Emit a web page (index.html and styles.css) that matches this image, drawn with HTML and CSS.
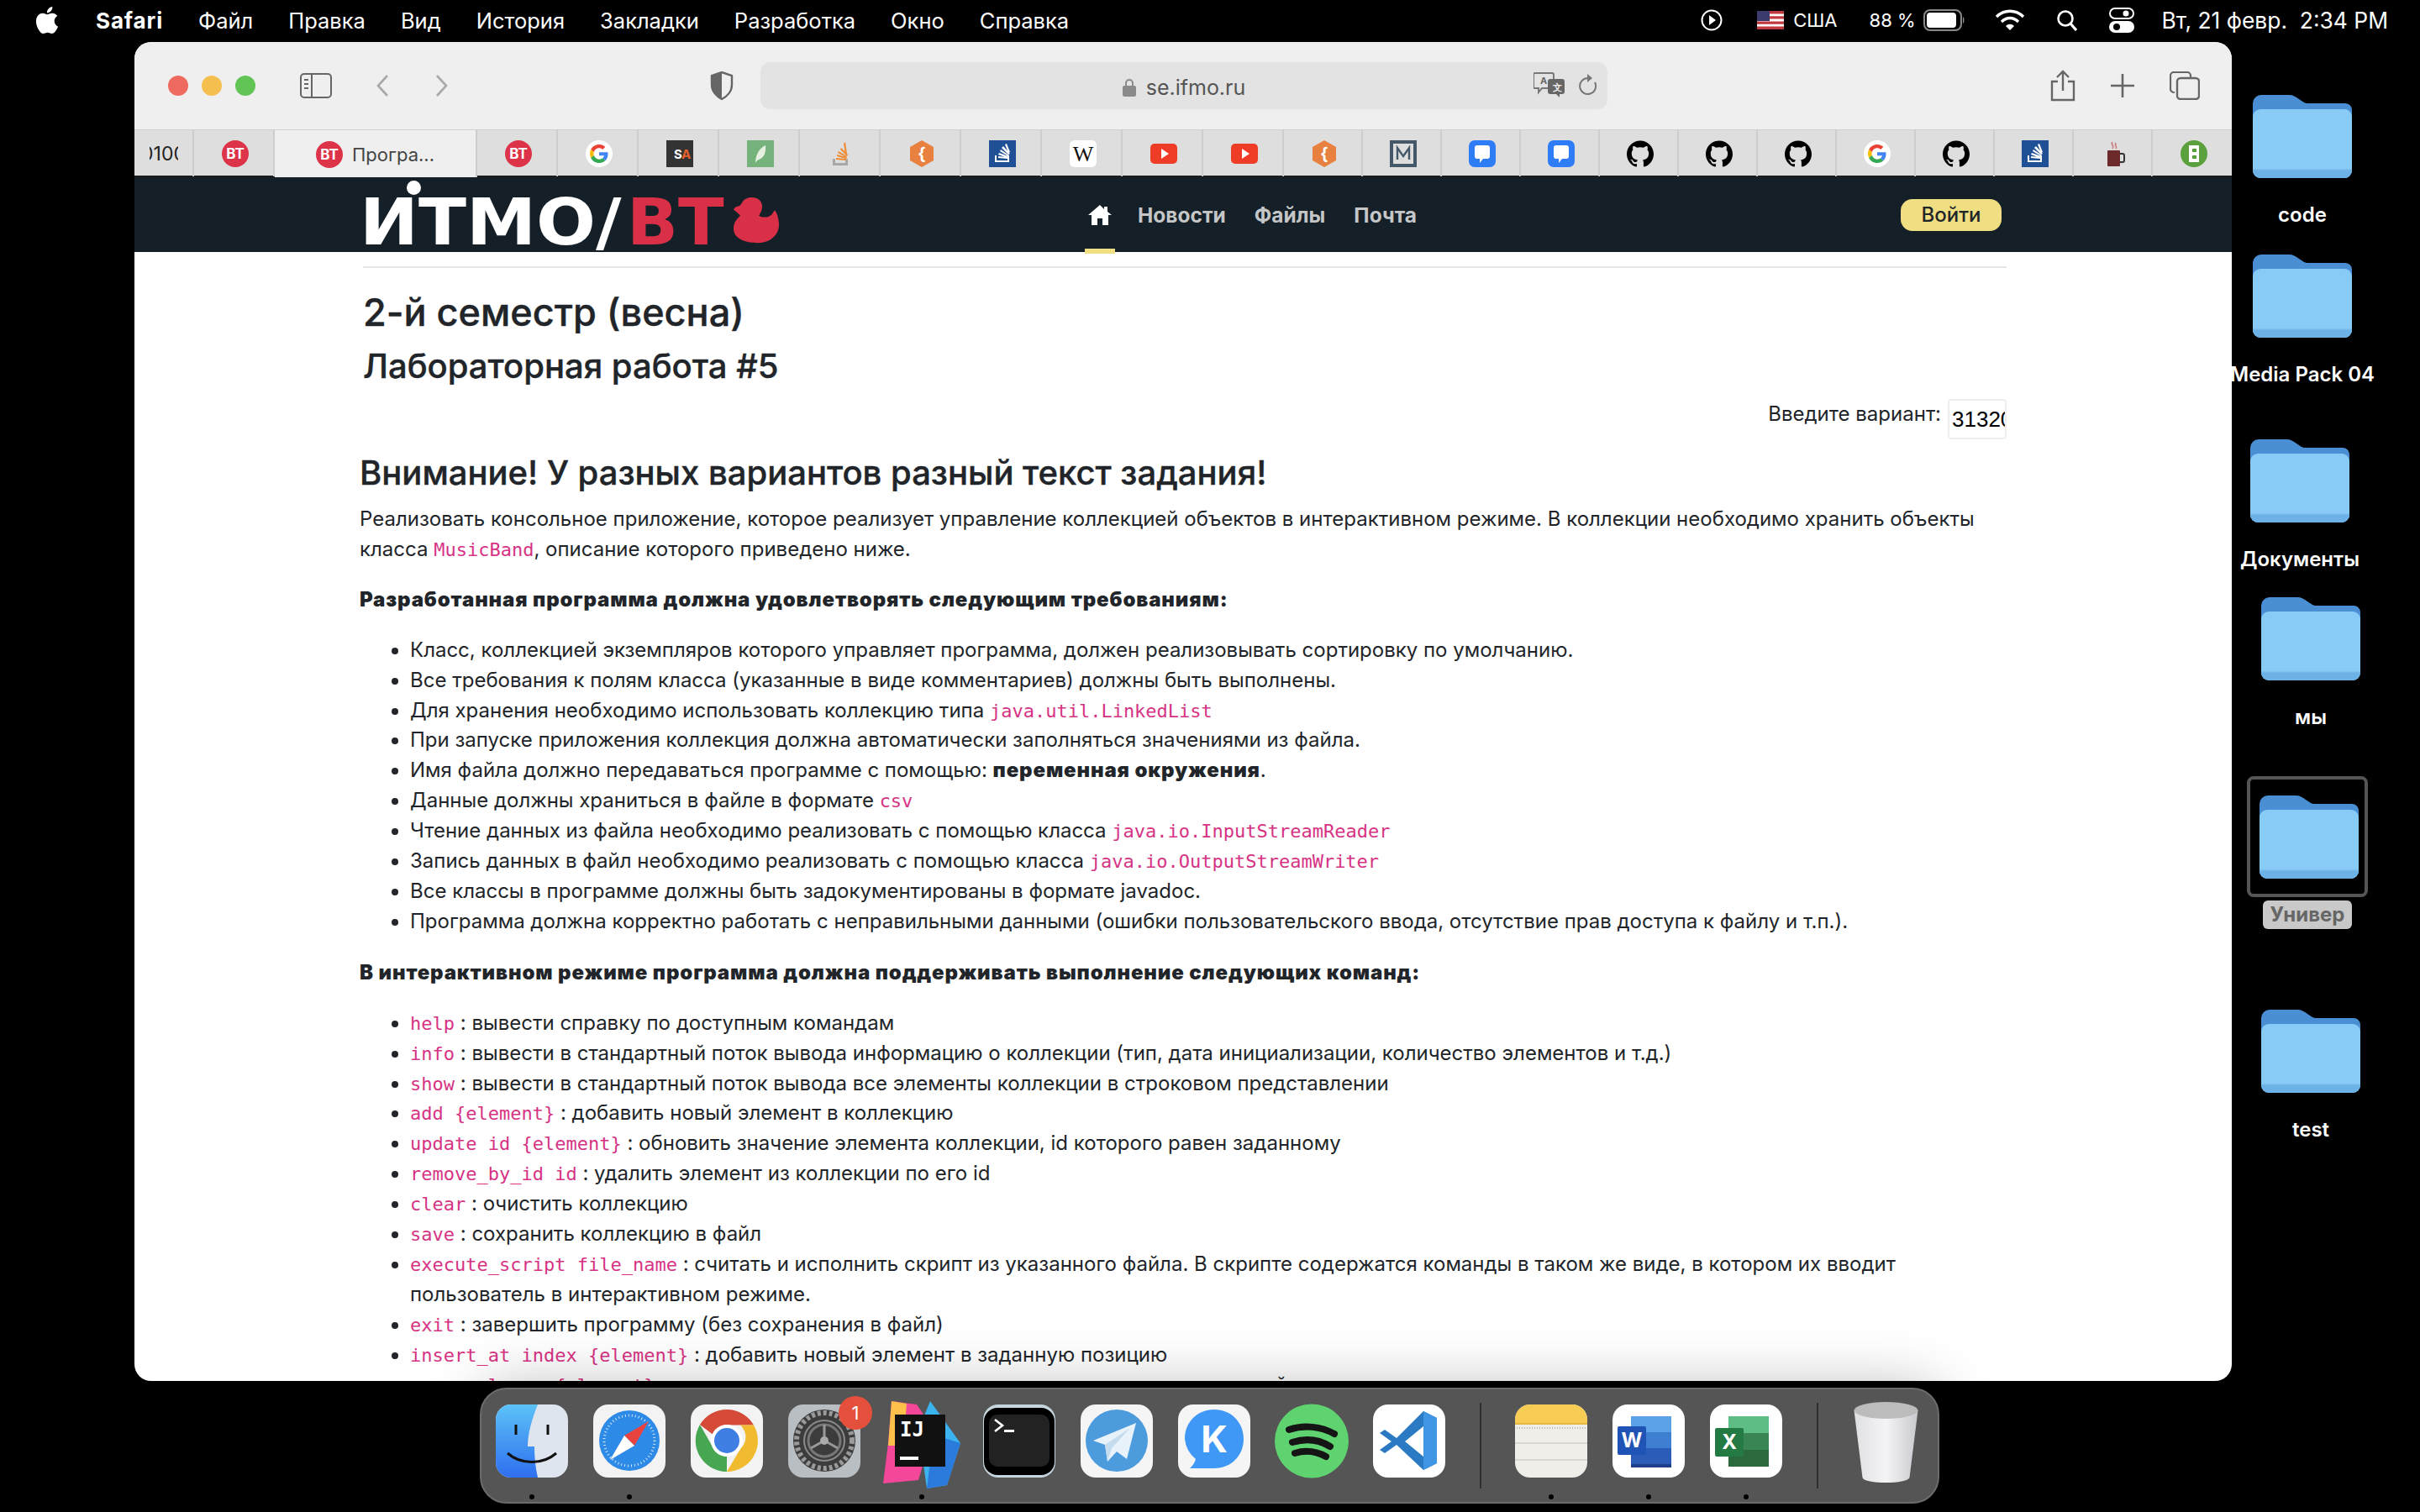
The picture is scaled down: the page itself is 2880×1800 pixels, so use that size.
FILE: index.html
```html
<!DOCTYPE html>
<html lang="ru">
<head>
  <meta charset="utf-8">
  <title>Лабораторная работа #5</title>
  <link rel="stylesheet" href="styles.css">
</head>
<body>
<svg class="defs" width="0" height="0">
  <defs>
    <symbol id="folder" viewBox="0 0 118 99">
      <path d="M0 10a10 10 0 0 1 10-10h33c5 0 8 2 12 5l6 4c2 1 4 1 7 1h42a8 8 0 0 1 8 8v30H0z" fill="#4a8fd3"/>
      <rect x="0" y="17" width="118" height="82" rx="9" fill="#88cbf7"/>
      <path d="M0 88h118v2a9 9 0 0 1-9 9H9a9 9 0 0 1-9-9z" fill="#6cb2e6"/>
      <rect x="0" y="88" width="118" height="1.5" fill="#7fc0ee"/>
    </symbol>
    <symbol id="fav-bt" viewBox="0 0 32 32">
      <circle cx="16" cy="16" r="16" fill="#dc3349"/>
      <text x="16" y="22" text-anchor="middle" class="fav-text" fill="#fff" font-size="17">BT</text>
    </symbol>
    <symbol id="fav-g" viewBox="0 0 32 32">
      <circle cx="16" cy="16" r="16" fill="#fff"/>
      <g transform="translate(5 5) scale(.4583)">
        <path fill="#EA4335" d="M24 9.5c3.54 0 6.71 1.22 9.21 3.6l6.85-6.85C35.9 2.38 30.47 0 24 0 14.62 0 6.51 5.38 2.56 13.22l7.98 6.19C12.43 13.72 17.74 9.5 24 9.5z"/>
        <path fill="#4285F4" d="M46.98 24.55c0-1.57-.15-3.09-.38-4.55H24v9.02h12.94c-.58 2.96-2.26 5.48-4.78 7.18l7.73 6c4.51-4.18 7.09-10.36 7.09-17.65z"/>
        <path fill="#FBBC05" d="M10.53 28.59c-.48-1.45-.76-2.99-.76-4.59s.27-3.14.76-4.59l-7.98-6.19C.92 16.46 0 20.12 0 24c0 3.88.92 7.54 2.56 10.78l7.97-6.19z"/>
        <path fill="#34A853" d="M24 48c6.48 0 11.93-2.13 15.89-5.81l-7.73-6c-2.15 1.45-4.92 2.3-8.16 2.3-6.26 0-11.57-4.22-13.47-9.91l-7.98 6.19C6.51 42.62 14.62 48 24 48z"/>
      </g>
    </symbol>
    <symbol id="fav-hex" viewBox="0 0 32 32">
      <path d="M16 0l14 8v16l-14 8-14-8V8z" fill="#e8813f"/>
      <text x="16" y="23" text-anchor="middle" class="fav-text" fill="#fff" font-size="20">{</text>
    </symbol>
    <symbol id="fav-stack" viewBox="0 0 32 32">
      <rect width="32" height="32" fill="#1f4f94"/>
      <path d="M7 18v8h17v-8h-2v6H9v-6z" fill="#fff"/>
      <path d="M11 19l11 1v2l-11-1zM12 15l11 4-1 2-11-4zM14 11l10 7-1 1-10-6zM17 7l8 9-2 1-8-8zM21 4l4 10-2 1-4-10z" fill="#fff"/>
    </symbol>
    <symbol id="fav-java" viewBox="0 0 32 32">
      <path d="M6 22v8h18v-8h-3v5H9v-5z" fill="#a8a8a8"/>
      <path d="M10 21l12 1v2l-12-1zM11 17l12 3-1 2-11-3zM13 13l10 6-1 1-10-5zM16 9l8 8-1 2-8-8zM21 2l2 14-2 1-2-13z" fill="#ef8b33"/>
    </symbol>
    <symbol id="fav-yt" viewBox="0 0 32 32">
      <rect y="4" width="32" height="24" rx="5" fill="#ee3c27"/>
      <path d="M13 10l9 6-9 6z" fill="#fff"/>
    </symbol>
    <symbol id="fav-chat" viewBox="0 0 32 32">
      <rect width="32" height="32" rx="7" fill="#2f7df6"/>
      <path d="M7 9a3 3 0 0 1 3-3h12a3 3 0 0 1 3 3v10a3 3 0 0 1-3 3h-5l-4 5v-5h-3a3 3 0 0 1-3-3z" fill="#fff"/>
    </symbol>
    <symbol id="fav-gh" viewBox="0 0 24 24">
      <path d="M12 .297c-6.63 0-12 5.373-12 12 0 5.303 3.438 9.8 8.205 11.385.6.113.82-.258.82-.577 0-.285-.01-1.04-.015-2.04-3.338.724-4.042-1.61-4.042-1.61C4.422 18.07 3.633 17.7 3.633 17.7c-1.087-.744.084-.729.084-.729 1.205.084 1.838 1.236 1.838 1.236 1.07 1.835 2.809 1.305 3.495.998.108-.776.417-1.305.76-1.605-2.665-.3-5.466-1.332-5.466-5.93 0-1.31.465-2.38 1.235-3.22-.135-.303-.54-1.523.105-3.176 0 0 1.005-.322 3.3 1.23.96-.267 1.98-.399 3-.405 1.02.006 2.04.138 3 .405 2.28-1.552 3.285-1.23 3.285-1.23.645 1.653.24 2.873.12 3.176.765.84 1.23 1.91 1.23 3.22 0 4.61-2.805 5.625-5.475 5.92.42.36.81 1.096.81 2.22 0 1.606-.015 2.896-.03 3.286 0 .315.21.69.825.57C20.565 22.092 24 17.592 24 12.297c0-6.627-5.373-12-12-12"/>
    </symbol>
  </defs>
</svg>

<!-- menu bar -->
<header class="menubar">
  <nav class="menu-left">
    <svg class="apple" viewBox="0 0 24 24"><path fill="#fff" d="M12.152 6.896c-.948 0-2.415-1.078-3.96-1.04-2.04.027-3.91 1.183-4.961 3.014-2.117 3.675-.546 9.103 1.519 12.09 1.013 1.454 2.208 3.09 3.792 3.039 1.52-.065 2.09-.987 3.935-.987 1.831 0 2.35.987 3.96.948 1.637-.026 2.676-1.48 3.676-2.948 1.156-1.688 1.636-3.325 1.662-3.415-.039-.013-3.182-1.221-3.22-4.857-.026-3.04 2.48-4.494 2.597-4.559-1.429-2.09-3.623-2.324-4.39-2.376-2-.156-3.675 1.09-4.61 1.09zM15.53 3.83c.843-1.012 1.4-2.427 1.245-3.83-1.207.052-2.662.805-3.532 1.818-.78.896-1.454 2.338-1.273 3.714 1.338.104 2.715-.688 3.559-1.701"/></svg>
    <b class="app-name">Safari</b>
    <span>Файл</span><span>Правка</span><span>Вид</span><span>История</span><span>Закладки</span><span>Разработка</span><span>Окно</span><span>Справка</span>
  </nav>
  <div class="menu-right">
    <svg class="st-play" viewBox="0 0 26 26"><circle cx="13" cy="13" r="11.5" fill="none" stroke="#fff" stroke-width="2"/><path d="M10 7l8 6-8 6z" fill="#fff"/></svg>
    <svg class="st-flag" viewBox="0 0 32 22">
      <rect width="32" height="22" fill="#fff"/>
      <path d="M0 0h32v3.4H0zM0 6.2h32v3.4H0zM0 12.4h32v3.4H0zM0 18.6h32V22H0z" fill="#c0393f"/>
      <rect width="15" height="12" fill="#3c3b6e"/>
    </svg>
    <span class="st-lang">США</span>
    <span class="st-pct">88 %</span>
    <svg class="st-batt" viewBox="0 0 50 26"><rect x="1" y="1" width="44" height="24" rx="7" fill="none" stroke="#8a8a8a" stroke-width="2"/><rect x="4" y="4" width="35" height="18" rx="4" fill="#fff"/><path d="M47 9c2 1 2 7 0 8z" fill="#8a8a8a"/></svg>
    <svg class="st-wifi" viewBox="0 0 36 26"><path d="M2 9c9-9 23-9 32 0" fill="none" stroke="#fff" stroke-width="3.4"/><path d="M8 15c6-6 14-6 20 0" fill="none" stroke="#fff" stroke-width="3.4"/><path d="M13 20c3-3 7-3 10 0l-5 5z" fill="#fff"/></svg>
    <svg class="st-search" viewBox="0 0 26 26"><circle cx="11" cy="11" r="8.5" fill="none" stroke="#fff" stroke-width="2.6"/><path d="M17 17l7 8" stroke="#fff" stroke-width="3.2"/></svg>
    <svg class="st-ctrl" viewBox="0 0 30 30"><rect x="1" y="1" width="28" height="12" rx="6" fill="none" stroke="#fff" stroke-width="2"/><circle cx="20" cy="7" r="3.5" fill="#fff"/><rect y="16" width="30" height="14" rx="7" fill="#fff"/><circle cx="9" cy="23" r="4" fill="#000"/></svg>
    <span class="st-clock">Вт, 21 февр.&nbsp; 2:34 PM</span>
  </div>
</header>

<!-- desktop folders -->
<div class="desk-item item-code">
  <svg class="folder"><use href="#folder"/></svg>
  <span class="desk-label">code</span>
</div>
<div class="desk-item item-media">
  <svg class="folder"><use href="#folder"/></svg>
  <span class="desk-label">Media Pack 04</span>
</div>
<div class="desk-item item-docs">
  <svg class="folder"><use href="#folder"/></svg>
  <span class="desk-label">Документы</span>
</div>
<div class="desk-item item-we">
  <svg class="folder"><use href="#folder"/></svg>
  <span class="desk-label">мы</span>
</div>
<div class="desk-item item-univer">
  <div class="desk-select"><svg class="folder"><use href="#folder"/></svg></div>
  <span class="desk-label selected">Универ</span>
</div>
<div class="desk-item item-test">
  <svg class="folder"><use href="#folder"/></svg>
  <span class="desk-label">test</span>
</div>

<!-- safari window -->
<main class="window">
  <div class="toolbar">
    <div class="lights"><i class="light red"></i><i class="light yellow"></i><i class="light green"></i></div>
    <svg class="tb-sidebar" viewBox="0 0 38 30"><rect x="1" y="1" width="36" height="28" rx="4" fill="none" stroke="#666" stroke-width="2"/><path d="M14 1v28" stroke="#666" stroke-width="2"/><path d="M5 8h5M5 13h5M5 18h5" stroke="#666" stroke-width="2"/></svg>
    <svg class="tb-back" viewBox="0 0 16 28"><path d="M14 2L3 14l11 12" fill="none" stroke="#a9a9a9" stroke-width="2.6"/></svg>
    <svg class="tb-forward" viewBox="0 0 16 28"><path d="M2 2l11 12L2 26" fill="none" stroke="#a9a9a9" stroke-width="2.6"/></svg>
    <svg class="tb-shield" viewBox="0 0 28 34"><path d="M14 1l12 4v11c0 8-6 14-12 17C8 30 2 24 2 16V5z" fill="none" stroke="#666" stroke-width="2.4"/><path d="M14 1L2 5v11c0 8 6 14 12 17z" fill="#666"/></svg>
    <div class="urlbar">
      <svg class="url-lock" viewBox="0 0 16 22"><path d="M4 10V6a4 4 0 0 1 8 0v4" fill="none" stroke="#8a8a8a" stroke-width="2"/><rect y="9" width="16" height="13" rx="2" fill="#8a8a8a"/></svg>
      <span class="url-text">se.ifmo.ru</span>
      <svg class="url-translate" viewBox="0 0 38 30">
        <path d="M2 1h20a2 2 0 0 1 2 2v14a2 2 0 0 1-2 2H10l-4 5v-5H2a2 2 0 0 1-2-2V3a2 2 0 0 1 2-2z" fill="#e3e3e3" stroke="#777" stroke-width="2"/>
        <rect x="17" y="8" width="20" height="18" rx="3" fill="#666"/><path d="M31 26v4l-4-4z" fill="#666"/>
        <text x="8" y="14" class="fav-text" font-size="11" fill="#666">A</text>
        <text x="23" y="22" class="fav-text" font-size="11" fill="#eee">文</text>
      </svg>
      <svg class="url-reload" viewBox="0 0 22 28"><path d="M12 5a9.5 9.5 0 1 0 8 5" fill="none" stroke="#777" stroke-width="2"/><path d="M11 0l6 5-6 5z" fill="#777"/></svg>
    </div>
    <svg class="tb-share" viewBox="0 0 30 38"><path d="M9 14H2v22h26V14h-7" fill="none" stroke="#666" stroke-width="2.4"/><path d="M15 25V2M8 9l7-7 7 7" fill="none" stroke="#666" stroke-width="2.4"/></svg>
    <svg class="tb-plus" viewBox="0 0 28 28"><path d="M14 0v28M0 14h28" stroke="#666" stroke-width="2.6"/></svg>
    <svg class="tb-tabs" viewBox="0 0 36 34"><path d="M6 25H5a4 4 0 0 1-4-4V5a4 4 0 0 1 4-4h16a4 4 0 0 1 4 4v2" fill="none" stroke="#666" stroke-width="2.2"/><rect x="9" y="8" width="26" height="25" rx="4" fill="none" stroke="#666" stroke-width="2.4"/></svg>
  </div>

  <div class="tabs">
    <div class="tab tab-partial"><span class="tab-cut"><span>001000</span></span></div>
    <div class="tab"><svg class="fav"><use href="#fav-bt"/></svg></div>
    <div class="tab tab-active"><svg class="fav"><use href="#fav-bt"/></svg><span class="tab-title">Програ...</span></div>
    <div class="tab"><svg class="fav"><use href="#fav-bt"/></svg></div>
    <div class="tab"><svg class="fav"><use href="#fav-g"/></svg></div>
    <div class="tab"><svg class="fav" viewBox="0 0 32 32"><rect width="32" height="32" fill="#333"/><text x="9" y="22" class="fav-text" font-size="15" fill="#fff">S</text><text x="18" y="22" class="fav-text" font-size="15" fill="#e5622c">A</text></svg></div>
    <div class="tab"><svg class="fav" viewBox="0 0 32 32"><rect width="32" height="32" fill="#76b27b"/><path d="M22 6c1 9-2 15-8 17-2 1-3 2-4 4 0-7 3-17 12-21z" fill="#e6f0e2"/></svg></div>
    <div class="tab"><svg class="fav"><use href="#fav-java"/></svg></div>
    <div class="tab"><svg class="fav"><use href="#fav-hex"/></svg></div>
    <div class="tab"><svg class="fav"><use href="#fav-stack"/></svg></div>
    <div class="tab"><svg class="fav" viewBox="0 0 32 32"><rect width="32" height="32" rx="6" fill="#fff"/><text x="16" y="25" text-anchor="middle" font-family="Liberation Serif, serif" font-size="26" fill="#111">W</text></svg></div>
    <div class="tab"><svg class="fav"><use href="#fav-yt"/></svg></div>
    <div class="tab"><svg class="fav"><use href="#fav-yt"/></svg></div>
    <div class="tab tab-slim"><svg class="fav"><use href="#fav-hex"/></svg></div>
    <div class="tab tab-slim"><svg class="fav" viewBox="0 0 32 32"><rect x="2" y="2" width="28" height="28" fill="#dedede" stroke="#44586a" stroke-width="4"/><path d="M9 23V9l7 10 7-10v14" fill="none" stroke="#44586a" stroke-width="2.4"/></svg></div>
    <div class="tab tab-slim"><svg class="fav"><use href="#fav-chat"/></svg></div>
    <div class="tab tab-slim"><svg class="fav"><use href="#fav-chat"/></svg></div>
    <div class="tab tab-slim"><svg class="fav"><use href="#fav-gh"/></svg></div>
    <div class="tab tab-slim"><svg class="fav"><use href="#fav-gh"/></svg></div>
    <div class="tab tab-slim"><svg class="fav"><use href="#fav-gh"/></svg></div>
    <div class="tab tab-slim"><svg class="fav"><use href="#fav-g"/></svg></div>
    <div class="tab tab-slim"><svg class="fav"><use href="#fav-gh"/></svg></div>
    <div class="tab tab-slim"><svg class="fav"><use href="#fav-stack"/></svg></div>
    <div class="tab tab-slim"><svg class="fav" viewBox="0 0 32 32"><path d="M14 2c-3 3 3 4 0 8M18 3c-2 3 2 4 0 7" fill="none" stroke="#c97d7d" stroke-width="1.6"/><rect x="8" y="12" width="15" height="19" rx="1" fill="#6d2a2a"/><path d="M23 16h3a2 2 0 0 1 2 2v6a2 2 0 0 1-2 2h-3" fill="none" stroke="#333" stroke-width="2"/></svg></div>
    <div class="tab tab-slim"><svg class="fav" viewBox="0 0 32 32"><circle cx="16" cy="16" r="16" fill="#5aa03c"/><rect x="10" y="6" width="12" height="20" fill="#fff"/><rect x="14" y="10" width="5" height="4" fill="#5aa03c"/><rect x="14" y="18" width="5" height="4" fill="#5aa03c"/></svg></div>
  </div>

  <div class="sitenav">
    <div class="logo">
      <span class="logo-white">ИТМО/</span><span class="logo-red">BT</span>
      <i class="logo-dot"></i>
      <svg class="logo-duck" viewBox="0 0 54 62" preserveAspectRatio="none"><path d="M4 12c3 0 5-2 6-5 3-6 8-7 12-7 8 0 12 6 12 12 0 5-2 9-4 12 4 3 11 3 15-1 2-2 3-5 4-6 3 4 5 12 5 19 0 14-11 24-25 24C13 60 0 54 0 41c0-7 3-12 8-17-2-3-6-6-8-8 1-2 2-3 4-4z" fill="#d93048"/></svg>
    </div>
    <div class="nav-links">
      <a class="nav-home">
        <svg viewBox="0 0 30 26"><path d="M15 1L1 13h4v12h7v-8h6v8h7V13h4l-5-4V3h-4v3z" fill="#fff"/></svg>
      </a>
      <a>Новости</a><a>Файлы</a><a>Почта</a>
    </div>
    <button class="login">Войти</button>
  </div>

  <div class="page">
    <hr class="rule">
    <h1 class="title">2-й семестр (весна)</h1>
    <h2 class="subtitle">Лабораторная работа #5</h2>
    <div class="variant">
      <label for="variant">Введите вариант:</label>
      <input id="variant" type="text" value="313200">
    </div>
    <h2 class="notice">Внимание! У разных вариантов разный текст задания!</h2>
    <p>Реализовать консольное приложение, которое реализует управление коллекцией объектов в интерактивном режиме. В коллекции необходимо хранить объекты класса <code>MusicBand</code>, описание которого приведено ниже.</p>
    <p><b>Разработанная программа должна удовлетворять следующим требованиям:</b></p>
    <ul>
      <li>Класс, коллекцией экземпляров которого управляет программа, должен реализовывать сортировку по умолчанию.</li>
      <li>Все требования к полям класса (указанные в виде комментариев) должны быть выполнены.</li>
      <li>Для хранения необходимо использовать коллекцию типа <code>java.util.LinkedList</code></li>
      <li>При запуске приложения коллекция должна автоматически заполняться значениями из файла.</li>
      <li>Имя файла должно передаваться программе с помощью: <b>переменная окружения</b>.</li>
      <li>Данные должны храниться в файле в формате <code>csv</code></li>
      <li>Чтение данных из файла необходимо реализовать с помощью класса <code>java.io.InputStreamReader</code></li>
      <li>Запись данных в файл необходимо реализовать с помощью класса <code>java.io.OutputStreamWriter</code></li>
      <li>Все классы в программе должны быть задокументированы в формате javadoc.</li>
      <li>Программа должна корректно работать с неправильными данными (ошибки пользовательского ввода, отсутствие прав доступа к файлу и т.п.).</li>
    </ul>
    <p><b>В интерактивном режиме программа должна поддерживать выполнение следующих команд:</b></p>
    <ul>
      <li><code>help</code> : вывести справку по доступным командам</li>
      <li><code>info</code> : вывести в стандартный поток вывода информацию о коллекции (тип, дата инициализации, количество элементов и т.д.)</li>
      <li><code>show</code> : вывести в стандартный поток вывода все элементы коллекции в строковом представлении</li>
      <li><code>add {element}</code> : добавить новый элемент в коллекцию</li>
      <li><code>update id {element}</code> : обновить значение элемента коллекции, id которого равен заданному</li>
      <li><code>remove_by_id id</code> : удалить элемент из коллекции по его id</li>
      <li><code>clear</code> : очистить коллекцию</li>
      <li><code>save</code> : сохранить коллекцию в файл</li>
      <li><code>execute_script file_name</code> : считать и исполнить скрипт из указанного файла. В скрипте содержатся команды в таком же виде, в котором их вводит пользователь в интерактивном режиме.</li>
      <li><code>exit</code> : завершить программу (без сохранения в файл)</li>
      <li><code>insert_at index {element}</code> : добавить новый элемент в заданную позицию</li>
      <li><code>remove_lower {element}</code> : удалить из коллекции все элементы, меньшие, чем заданный</li>
    </ul>
  </div>
</main>

<!-- dock -->
<footer class="dock">
  <div class="dock-item running">
    <svg viewBox="0 0 86 87"><defs><linearGradient id="fd" x1="0" y1="0" x2="0" y2="1"><stop offset="0" stop-color="#5cc2f7"/><stop offset="1" stop-color="#2f6ff0"/></linearGradient></defs><rect width="86" height="87" rx="18" fill="#dfe5ee"/><path d="M18 0h32c-8 20-12 36-12 50h8c0 12 1 24 4 37H18A18 18 0 0 1 0 69V18A18 18 0 0 1 18 0z" fill="url(#fd)"/><path d="M24 24v12M62 24v12" stroke="#111" stroke-width="3"/><path d="M14 58c16 14 42 14 58 0" fill="none" stroke="#111" stroke-width="3"/></svg>
  </div>
  <div class="dock-item running">
    <svg viewBox="0 0 86 87"><rect width="86" height="87" rx="18" fill="#f3f3f3"/><circle cx="43" cy="43" r="36" fill="#2d8ae6"/><circle cx="43" cy="43" r="30" fill="none" stroke="#cfe6fb" stroke-width="3" stroke-dasharray="1 3"/><path d="M66 20L37 37l12 12z" fill="#e8433f"/><path d="M20 66l17-29 12 12z" fill="#fff"/></svg>
  </div>
  <div class="dock-item">
    <svg viewBox="0 0 86 87"><rect width="86" height="87" rx="18" fill="#f3f3f3"/><path d="M43 6a37 37 0 0 1 32 18.500H43a19 19 0 0 0-17 11L11 24A37 37 0 0 1 43 6z" fill="#d64a38"/><path d="M75 24.500A37 37 0 0 1 43 80l16-27a19 19 0 0 0 0-28.500z" fill="#f0bb2e"/><path d="M43 80A37 37 0 0 1 11 24l16 28a19 19 0 0 0 16 10z" fill="#47a652"/><circle cx="43" cy="43" r="19" fill="#fff"/><circle cx="43" cy="43" r="15" fill="#3f7ee2"/></svg>
  </div>
  <div class="dock-item">
    <svg viewBox="0 0 86 87"><rect width="86" height="87" rx="18" fill="#b9bec2"/><circle cx="43" cy="43" r="37" fill="#3c3c3c"/><circle cx="43" cy="43" r="33" fill="none" stroke="#9a9a9a" stroke-width="6" stroke-dasharray="4 3"/><circle cx="43" cy="43" r="24" fill="none" stroke="#8a8a8a" stroke-width="2"/><circle cx="43" cy="43" r="19" fill="none" stroke="#777" stroke-width="3"/><path d="M43 43V24M43 43L27 52M43 43l16 9" stroke="#999" stroke-width="3"/><circle cx="43" cy="43" r="5" fill="#aaa"/></svg>
    <span class="dock-badge">1</span>
  </div>
  <div class="dock-item idea running">
    <svg viewBox="0 0 92 104"><path d="M10 0l30 4 20 30-18 60L0 98 6 50z" fill="#f5479a"/><path d="M10 0l18 3-4 50H6z" fill="#fdc04b"/><path d="M56 0l36 50-16 50-24 4-10-70z" fill="#3ab3ef"/><path d="M60 40l32 10-16 50-24 4z" fill="#2a7bdc"/><rect x="14" y="16" width="60" height="62" fill="#111"/><text x="20" y="42" class="idea-text" font-size="24" fill="#fff">IJ</text><rect x="20" y="66" width="22" height="4" fill="#fff"/></svg>
  </div>
  <div class="dock-item">
    <svg viewBox="0 0 86 87"><rect width="86" height="87" rx="18" fill="#c5d5dd"/><rect x="1" y="4" width="84" height="80" rx="16" fill="#000"/><rect x="7" y="12" width="72" height="62" rx="10" fill="#222"/><path d="M14 18l9 7-9 7" fill="none" stroke="#fff" stroke-width="2.6"/><rect x="25" y="30" width="12" height="3" fill="#fff"/></svg>
  </div>
  <div class="dock-item">
    <svg viewBox="0 0 86 87"><rect width="86" height="87" rx="18" fill="#f5f5f5"/><circle cx="43" cy="43" r="37" fill="#4b9bdd"/><path d="M66 22L15 43l14 5 3 20 11-12 12 9z" fill="#e8f2fa"/><path d="M29 48l30-20-22 24-5 16z" fill="#c4dcee"/></svg>
  </div>
  <div class="dock-item">
    <svg viewBox="0 0 86 87"><rect width="86" height="87" rx="18" fill="#f5f5f5"/><path d="M43 6c20 0 35 15 35 35S63 76 43 76H14c4-4 6-7 7-11A35 35 0 0 1 8 41C8 21 23 6 43 6z" fill="#3f98f5"/><text x="43" y="57" text-anchor="middle" class="fav-text" font-size="44" fill="#fff">K</text></svg>
  </div>
  <div class="dock-item">
    <svg viewBox="0 0 86 87"><circle cx="43" cy="43.500" r="44" fill="#5fd36f"/><path d="M16 30c18-6 38-4 54 5M20 45c16-5 32-3 45 5M23 58c13-4 26-2 37 4" fill="none" stroke="#151515" stroke-width="8" stroke-linecap="round"/></svg>
  </div>
  <div class="dock-item">
    <svg viewBox="0 0 86 87"><rect width="86" height="87" rx="18" fill="#fff"/><path d="M60 8l16 8v54l-16 8-32-30-14 10-6-4 14-10-14-10 6-4 14 10z" fill="#2b7ac4"/><path d="M60 8l16 8v54l-16 8z" fill="#3f96e2"/><path d="M60 26L38 44l22 18z" fill="#fff"/></svg>
  </div>
  <i class="dock-sep sep-apps"></i>
  <div class="dock-item running">
    <svg viewBox="0 0 86 87"><rect width="86" height="87" rx="18" fill="#efeee9"/><path d="M0 24V18A18 18 0 0 1 18 0h50a18 18 0 0 1 18 18v6z" fill="#f6cc55"/><rect y="22" width="86" height="2" fill="#e6b73f"/><path d="M0 46h86M0 66h86" stroke="#d6d6d2" stroke-width="2"/><path d="M2 28h82" stroke="#bbb" stroke-width="2" stroke-dasharray="1 2"/></svg>
  </div>
  <div class="dock-item running">
    <svg viewBox="0 0 86 87"><rect width="86" height="87" rx="18" fill="#fff"/><rect x="22" y="14" width="48" height="19" fill="#5aa1e8"/><rect x="22" y="33" width="48" height="19" fill="#3f7fd1"/><rect x="22" y="52" width="48" height="19" fill="#2a5cb8"/><rect x="22" y="71" width="48" height="4" fill="#1d3f8c"/><rect x="6" y="26" width="34" height="34" rx="2" fill="#1f53b5"/><text x="23" y="51" text-anchor="middle" class="fav-text" font-size="24" fill="#fff">W</text></svg>
  </div>
  <div class="dock-item running">
    <svg viewBox="0 0 86 87"><rect width="86" height="87" rx="18" fill="#fff"/><rect x="22" y="14" width="48" height="20" fill="#5dbd85"/><rect x="22" y="34" width="48" height="20" fill="#3a8652"/><rect x="22" y="54" width="48" height="20" fill="#2a6a3d"/><rect x="6" y="28" width="34" height="34" rx="2" fill="#247a43"/><text x="23" y="53" text-anchor="middle" class="fav-text" font-size="24" fill="#fff">X</text></svg>
  </div>
  <i class="dock-sep"></i>
  <div class="dock-item trash">
    <svg viewBox="0 0 76 96"><defs><linearGradient id="tr" x1="0" x2="1" y1="0" y2="0"><stop offset="0" stop-color="#dfe0e2"/><stop offset=".5" stop-color="#f4f4f6"/><stop offset="1" stop-color="#c9cace"/></linearGradient></defs><path d="M0 10l10 80c1 4 14 6 28 6s26-2 28-6l10-80z" fill="url(#tr)"/><ellipse cx="38" cy="10" rx="38" ry="10" fill="#bcbcbc"/></svg>
  </div>
</footer>
</body>
</html>
```

FILE: styles.css
```css
* {
  box-sizing: border-box;
}

html,
body {
  margin: 0;
  height: 100%;
}

body {
  position: relative;
  width: 2880px;
  height: 1800px;
  overflow: hidden;
  background-color: #000;
  font-family: "Inter", "Noto Sans", sans-serif;
  color: #212529;
}

svg {
  flex: none;
}

.defs {
  position: absolute;
}

.fav-text {
  font-family: "Inter", sans-serif;
  font-weight: 700;
}

/* Menu bar */
.menubar {
  display: flex;
  justify-content: space-between;
  align-items: center;
  height: 50px;
  padding: 0 38px 2px 40px;
  color: #fff;
  font-size: 25.5px;
}

.menu-left {
  display: flex;
  align-items: center;
  gap: 42px;
}

.apple {
  width: 32px;
  height: 36px;
}

.app-name {
  font-size: 26px;
  font-weight: 700;
}

.menu-right {
  display: flex;
  align-items: center;
  font-size: 22px;
}

.st-play {
  width: 26px;
  height: 26px;
  margin-right: 41px;
}

.st-flag {
  width: 32px;
  height: 22px;
  margin-right: 11px;
}

.st-lang {
  margin-right: 38px;
}

.st-pct {
  margin-right: 9px;
}

.st-batt {
  width: 50px;
  height: 26px;
  margin-right: 35px;
}

.st-wifi {
  width: 36px;
  height: 26px;
  margin-right: 37px;
}

.st-search {
  width: 26px;
  height: 26px;
  margin-right: 37px;
}

.st-ctrl {
  width: 30px;
  height: 30px;
  margin-right: 33px;
}

.st-clock {
  font-size: 26.4px;
}

/* Desktop folders */
.desk-item {
  position: absolute;
  width: 200px;
  display: flex;
  flex-direction: column;
  align-items: center;
}

.folder {
  display: block;
  width: 118px;
  height: 99px;
}

.desk-label {
  margin-top: 29px;
  color: #fff;
  font-size: 24px;
  font-weight: 600;
  line-height: 30px;
  white-space: nowrap;
}

.item-code { left: 2640px; top: 113px; }
.item-media { left: 2640px; top: 303px; }
.item-docs { left: 2637px; top: 523px; }
.item-we { left: 2650px; top: 711px; }
.item-univer { left: 2646px; top: 924px; }
.item-test { left: 2650px; top: 1202px; }

.desk-select {
  width: 144px;
  height: 144px;
  padding: 19px 11px;
  border: 4px solid #555;
  border-radius: 8px;
}

.desk-label.selected {
  margin-top: 4px;
  padding: 2px 9px;
  background-color: #c9c9c9;
  border-radius: 6px;
  color: #666;
  font-weight: 700;
}

/* Safari window */
.window {
  position: absolute;
  left: 160px;
  top: 50px;
  width: 2496px;
  height: 1594px;
  display: flex;
  flex-direction: column;
  overflow: hidden;
  background-color: #fff;
  border-radius: 20px;
}

.toolbar {
  position: relative;
  display: flex;
  align-items: center;
  flex: none;
  height: 104px;
  padding: 0 38px 0 40px;
  background-color: #efefef;
}

.lights {
  display: flex;
  gap: 16px;
  margin-right: 53px;
}

.light {
  width: 24px;
  height: 24px;
  border-radius: 50%;
}

.red { background-color: #ee6a5f; }
.yellow { background-color: #f5bf4f; }
.green { background-color: #61c454; }

.tb-sidebar {
  width: 38px;
  height: 30px;
  margin-right: 52px;
}

.tb-back {
  width: 16px;
  height: 28px;
  margin-right: 55px;
}

.tb-forward {
  width: 16px;
  height: 28px;
  margin-right: 311px;
}

.tb-shield {
  width: 28px;
  height: 34px;
  margin-right: 32px;
}

.urlbar {
  position: relative;
  display: flex;
  align-items: center;
  justify-content: center;
  flex: none;
  width: 1008px;
  height: 56px;
  margin-right: 527px;
  padding-top: 3px;
  background-color: #e3e3e3;
  border-radius: 12px;
  color: #555;
  font-size: 25px;
}

.url-lock {
  width: 16px;
  height: 22px;
  margin-right: 12px;
}

.url-translate {
  position: absolute;
  right: 50px;
  top: 12px;
  width: 38px;
  height: 30px;
}

.url-reload {
  position: absolute;
  right: 13px;
  top: 14px;
  width: 22px;
  height: 28px;
}

.tb-share {
  width: 30px;
  height: 38px;
  margin-right: 42px;
}

.tb-plus {
  width: 28px;
  height: 28px;
  margin-right: 42px;
}

.tb-tabs {
  width: 36px;
  height: 34px;
}

/* Tab strip */
.tabs {
  display: flex;
  flex: none;
  height: 57px;
  background-color: #dedede;
  border-top: 1px solid #cfcfcf;
  box-shadow: inset 0 -2px 0 #1b1b1b;
}

.tab {
  display: flex;
  align-items: center;
  justify-content: center;
  flex: none;
  width: 96px;
  height: 55px;
  padding: 1px 0 0 4px;
  border-right: 2px solid #cdcdcd;
}

.tab-slim {
  width: 94px;
}

.tab-slim:last-child {
  border-right: none;
}

.tab-partial {
  width: 71px;
  padding-left: 0;
}

/* the tab title is cut on both sides by the narrow tab */
.tab-cut {
  display: flex;
  justify-content: center;
  width: 34px;
  overflow: hidden;
  color: #222;
  font-size: 23px;
  white-space: nowrap;
}

.tab-active {
  justify-content: flex-start;
  width: 241px;
  height: 56px;
  padding-left: 49px;
  background-color: #efefef;
}

.fav {
  flex: none;
  width: 32px;
  height: 32px;
}

.tab-title {
  margin-left: 11px;
  color: #444;
  font-size: 22px;
  white-space: nowrap;
}

/* Site navbar */
.sitenav {
  position: relative;
  display: flex;
  align-items: center;
  flex: none;
  height: 89px;
  padding: 0 274px;
  background-color: #141f27;
}

.logo {
  position: relative;
  display: flex;
  align-items: flex-start;
  flex: none;
  width: 494px;
  height: 89px;
  margin-right: 363px;
  font-family: "DejaVu Sans", sans-serif;
  font-size: 77px;
  font-weight: 700;
  line-height: 89px;
  white-space: nowrap;
}

/* letters of the wordmark are wider than any installed bold */
.logo-white {
  flex: none;
  width: 318px;
  margin: 9px 0 0 -6px;
  color: #fff;
  transform: scaleX(1.085);
  transform-origin: left center;
}

.logo-red {
  flex: none;
  width: 124px;
  margin-top: 9px;
  color: #d93048;
  transform: scaleX(1.04);
  transform-origin: left center;
}

.logo-dot {
  position: absolute;
  left: 50px;
  top: 4px;
  width: 17px;
  height: 17px;
  background-color: #fff;
  border-radius: 50%;
}

.logo-duck {
  flex: none;
  width: 54px;
  height: 56px;
  margin: 24px 0 0 3px;
}

.nav-links {
  display: flex;
  align-items: center;
  gap: 34px;
  height: 100%;
  color: #c4c6c7;
  font-size: 24.5px;
  font-weight: 700;
}

.nav-home {
  position: relative;
  display: flex;
  align-items: center;
  justify-content: center;
  width: 36px;
  height: 100%;
  margin-right: -7px;
}

.nav-home svg {
  width: 30px;
  height: 26px;
}

/* yellow mark under the active item, runs past the bar */
.nav-home::after {
  content: "";
  position: absolute;
  left: 0;
  bottom: -2px;
  width: 36px;
  height: 6px;
  background-color: #f0de82;
}

.login {
  margin-left: auto;
  width: 120px;
  height: 38px;
  padding: 0;
  background-color: #f0de82;
  border: none;
  border-radius: 14px;
  color: #212529;
  font-family: inherit;
  font-size: 24px;
  font-weight: 500;
}

/* Page content */
.page {
  flex: 1;
  min-height: 0;
  overflow: hidden;
  padding: 17px 268px 0 268px;
  font-size: 24px;
  line-height: 35.9px;
}

.rule {
  height: 2px;
  margin: 0 0 0 4px;
  background-color: #e6e6e6;
  border: none;
}

.title {
  margin: 24px 0 0 4px;
  font-size: 45px;
  font-weight: 500;
  line-height: 58px;
  -webkit-text-stroke: 0.4px #212529;
}

.subtitle {
  margin: 11px 0 0 4px;
  font-size: 40px;
  font-weight: 500;
  line-height: 48px;
  -webkit-text-stroke: 0.4px #212529;
}

.variant {
  display: flex;
  justify-content: flex-end;
  align-items: flex-start;
  gap: 8px;
  margin-top: 15px;
  font-size: 24px;
}

.variant input {
  width: 70px;
  height: 48px;
  padding: 4px 0 4px 3px;
  border: 2px solid #eee;
  border-radius: 4px;
  color: #000;
  font-family: "Liberation Sans", sans-serif;
  font-size: 26px;
}

.notice {
  margin: 16px 0 13px;
  font-size: 40px;
  font-weight: 500;
  line-height: 48px;
  -webkit-text-stroke: 0.4px #212529;
}

p {
  margin: 0 0 24px;
}

b {
  font-weight: 900;
  letter-spacing: 0.86px;
}

ul {
  margin: 0 0 25px;
  padding-left: 60px;
}

code {
  color: #d63384;
  font-family: "DejaVu Sans Mono", monospace;
  font-size: 22px;
  line-height: 1;
}

/* Dock */
.dock {
  position: absolute;
  left: 571px;
  top: 1652px;
  display: flex;
  gap: 30px;
  width: 1737px;
  height: 138px;
  padding: 18px 0 0 17px;
  background-color: #555;
  border: 2px solid #6b6b6b;
  border-radius: 32px;
  box-shadow: 0 0 70px rgba(0, 0, 0, 0.28);
}

.dock-item {
  position: relative;
  flex: none;
  width: 86px;
  height: 87px;
}

.dock-item svg {
  display: block;
  width: 100%;
  height: 100%;
  overflow: visible;
}

.dock-item.running::after {
  content: "";
  position: absolute;
  left: 40px;
  bottom: -26px;
  width: 6px;
  height: 6px;
  background-color: #000;
  border-radius: 50%;
}

.idea svg {
  width: 92px;
  height: 104px;
  margin: -4px 0 0 -3px;
}

.trash {
  margin-left: 4px;
}

.trash svg {
  width: 77px;
  height: 96px;
  margin-top: -3px;
}

.idea-text {
  font-family: "DejaVu Sans Mono", monospace;
  font-weight: 700;
}

.dock-badge {
  position: absolute;
  right: -14px;
  top: -10px;
  width: 40px;
  height: 40px;
  background-color: #e5503c;
  border-radius: 50%;
  color: #fff;
  font-size: 22px;
  line-height: 40px;
  text-align: center;
}

.dock-sep {
  flex: none;
  width: 2px;
  height: 102px;
  margin: -2px 8px 0 11px;
  background-color: #2e2e2e;
}

.sep-apps {
  margin-right: 10px;
}
```
